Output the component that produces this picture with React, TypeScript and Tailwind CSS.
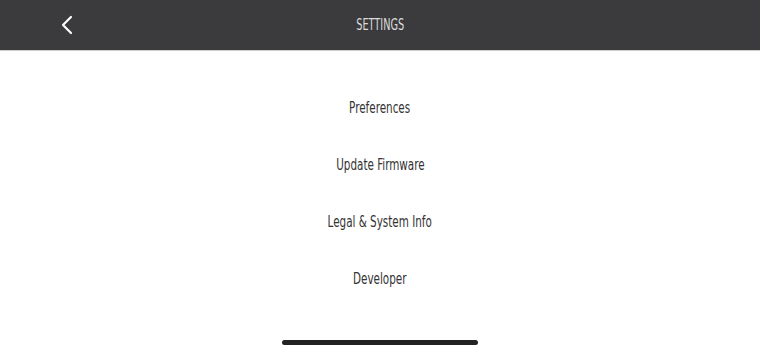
import React from "react";

const font = { fontFamily: '"DejaVu Sans Condensed", "Liberation Sans", sans-serif' };

export default function App() {
  const items = ["Preferences", "Update Firmware", "Legal & System Info", "Developer"];
  return (
    <div className="w-[760px] h-[352px] bg-white flex flex-col overflow-hidden" style={font}>
      <div className="h-[51px] bg-[#3b3b3d] flex items-center border-b border-[#cfcfcf]">
        <div className="w-[130px] flex items-center pl-[60px]">
          <svg width="14" height="20" viewBox="0 0 14 20" fill="none">
            <path d="M11 2 L3 10 L11 18" stroke="#ffffff" strokeWidth="2.2" strokeLinecap="round" strokeLinejoin="round" />
          </svg>
        </div>
        <div className="flex-1 flex justify-center pr-[130px]">
          <span className="inline-block text-[15px] text-[#dcdcdc] scale-x-[0.72]">SETTINGS</span>
        </div>
      </div>
      <div className="flex flex-col items-center pt-[47px] gap-[37px]">
        {items.map((t) => (
          <span key={t} className="inline-block text-[15px] leading-[20px] text-[#333333] scale-x-[0.77]">{t}</span>
        ))}
      </div>
      <div className="mt-auto mb-[7px] flex justify-center">
        <div className="w-[196px] h-[5px] rounded-full bg-[#222]" />
      </div>
    </div>
  );
}
